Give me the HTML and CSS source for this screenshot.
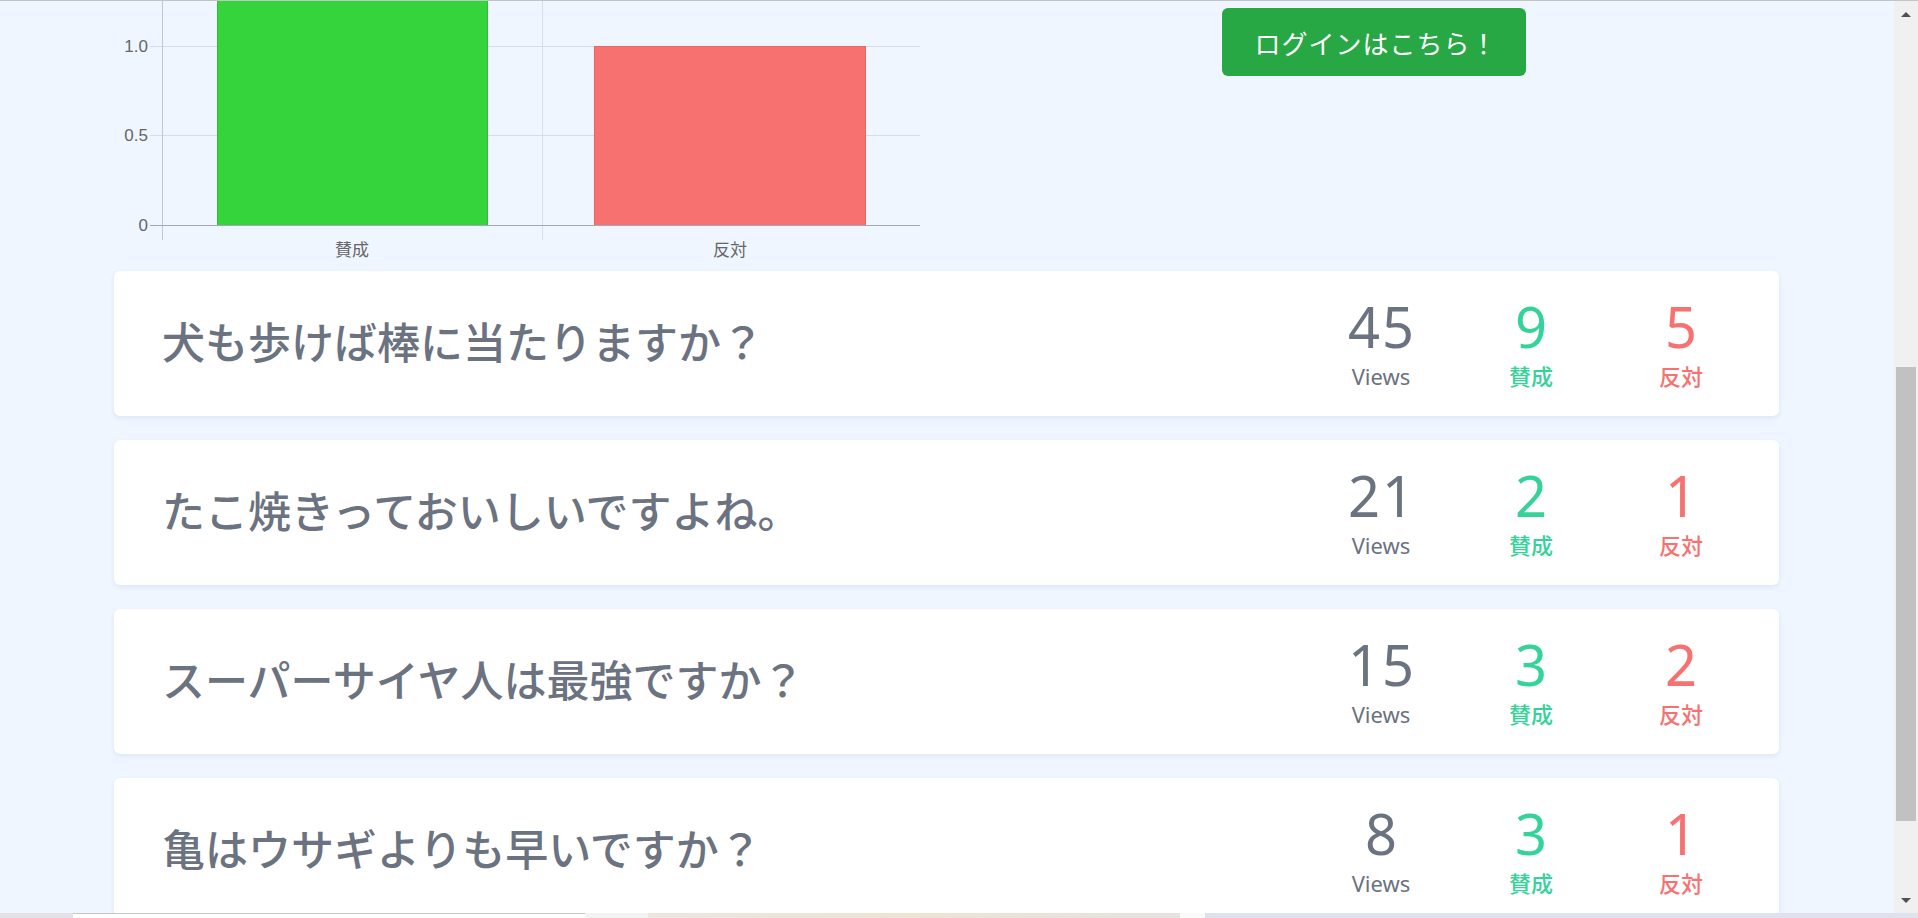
FILE: index.html
```html
<!DOCTYPE html>
<html lang="ja">
<head>
<meta charset="utf-8">
<title>質問一覧</title>
<link rel="stylesheet" href="styles.css">
</head>
<body>
<div class="screen">
  <div class="topline"></div>
  <div class="viewport">
    <main class="page">
      <div class="container">
        <section class="overview">
          <div class="chart">
            <svg class="chart-svg" width="810" height="262" viewBox="0 0 810 262">
              <g stroke="#d7dce5" stroke-width="1">
                <line x1="36" y1="45.5" x2="806" y2="45.5"/>
                <line x1="36" y1="134.5" x2="806" y2="134.5"/>
                <line x1="428.5" y1="0" x2="428.5" y2="239"/>
              </g>
              <line x1="48.5" y1="0" x2="48.5" y2="239" stroke="#c2c7cf" stroke-width="1"/>
              <rect x="103.5" y="-4" width="270" height="228.5" fill="#35d43d" stroke="#2dbf35" stroke-width="1"/>
              <rect x="480.5" y="45.5" width="271" height="179" fill="#f87171" stroke="#e96565" stroke-width="1"/>
              <line x1="36" y1="224.5" x2="806" y2="224.5" stroke="#a4a9b1" stroke-width="1"/>
              <g class="tick-y" text-anchor="end">
                <text x="34" y="51">1.0</text>
                <text x="34" y="140">0.5</text>
                <text x="34" y="230">0</text>
              </g>
              <g class="tick-x" text-anchor="middle">
                <text x="238" y="255">賛成</text>
                <text x="616" y="255">反対</text>
              </g>
            </svg>
          </div>
          <div class="login">
            <a class="login-btn" href="#">ログインはこちら！</a>
          </div>
        </section>

        <ul class="questions">
          <li class="card">
            <h2 class="q-title">犬も歩けば棒に当たりますか？</h2>
            <div class="stats">
              <div class="stat views"><span class="num">45</span><span class="label">Views</span></div>
              <div class="stat agree"><span class="num">9</span><span class="label">賛成</span></div>
              <div class="stat disagree"><span class="num">5</span><span class="label">反対</span></div>
            </div>
          </li>
          <li class="card">
            <h2 class="q-title">たこ焼きっておいしいですよね。</h2>
            <div class="stats">
              <div class="stat views"><span class="num">21</span><span class="label">Views</span></div>
              <div class="stat agree"><span class="num">2</span><span class="label">賛成</span></div>
              <div class="stat disagree"><span class="num">1</span><span class="label">反対</span></div>
            </div>
          </li>
          <li class="card">
            <h2 class="q-title">スーパーサイヤ人は最強ですか？</h2>
            <div class="stats">
              <div class="stat views"><span class="num">15</span><span class="label">Views</span></div>
              <div class="stat agree"><span class="num">3</span><span class="label">賛成</span></div>
              <div class="stat disagree"><span class="num">2</span><span class="label">反対</span></div>
            </div>
          </li>
          <li class="card">
            <h2 class="q-title">亀はウサギよりも早いですか？</h2>
            <div class="stats">
              <div class="stat views"><span class="num">8</span><span class="label">Views</span></div>
              <div class="stat agree"><span class="num">3</span><span class="label">賛成</span></div>
              <div class="stat disagree"><span class="num">1</span><span class="label">反対</span></div>
            </div>
          </li>
        </ul>
      </div>
    </main>
    <div class="scrollbar">
      <div class="sb-btn"><span class="tri-up"></span></div>
      <div class="sb-track"><div class="sb-thumb"></div></div>
      <div class="sb-btn"><span class="tri-down"></span></div>
    </div>
  </div>
  <div class="taskbar">
    <div class="tb tb-a"></div>
    <div class="tb tb-b"></div>
    <div class="tb tb-c"></div>
    <div class="tb tb-d"></div>
    <div class="tb tb-e"></div>
    <div class="tb tb-f"></div>
  </div>
</div>
</body>
</html>
```

FILE: styles.css
```css
* { box-sizing: border-box; }

html, body {
  margin: 0;
  padding: 0;
  width: 1918px;
  height: 918px;
  overflow: hidden;
  background: #eff6ff;
  font-family: "Noto Sans", "Noto Sans CJK JP", sans-serif;
}

.screen {
  display: flex;
  flex-direction: column;
  width: 1918px;
  height: 918px;
}

.topline {
  height: 1px;
  background: #c4c4c4;
  flex: none;
}

.viewport {
  flex: 1;
  display: flex;
  min-height: 0;
}

.page {
  flex: 1;
  overflow: hidden;
  background: #eff6ff;
}

.container {
  width: 1779px;
  padding-left: 114px;
}

/* ---------- overview (chart + login) ---------- */
.overview {
  display: flex;
  height: 270px;
}

.chart {
  width: 810px;
  height: 262px;
  flex: none;
}

.chart-svg {
  display: block;
  overflow: hidden;
}

.tick-y text {
  font-family: "Liberation Sans", Arial, sans-serif;
  font-size: 17px;
  fill: #666666;
}

.tick-x text {
  font-family: "Noto Sans CJK JP", sans-serif;
  font-size: 17px;
  fill: #666666;
}

.login {
  margin-left: 298px;
  padding-top: 7px;
}

.login-btn {
  display: flex;
  align-items: center;
  justify-content: center;
  width: 304px;
  height: 68px;
  background: #28a745;
  border-radius: 6px;
  color: #ffffff;
  text-decoration: none;
  font-family: "Noto Sans CJK JP", sans-serif;
  font-weight: 400;
  font-size: 26px;
  letter-spacing: 1px;
  padding-left: 4px;
}

/* ---------- question cards ---------- */
.questions {
  list-style: none;
  margin: 0;
  padding: 0;
  display: flex;
  flex-direction: column;
  gap: 24px;
}

.card {
  height: 145px;
  flex: none;
  background: #ffffff;
  border-radius: 6px;
  box-shadow: 0 2px 5px rgba(40, 70, 140, 0.09);
  display: flex;
  align-items: center;
  padding: 0 48px;
}

.q-title {
  flex: 1;
  margin: 0 0 6px 0;
  font-family: "Noto Sans CJK JP", sans-serif;
  font-weight: 500;
  font-size: 43px;
  line-height: 1;
  color: #6b7280;
}

.stats {
  display: flex;
  gap: 50px;
}

.stat {
  width: 100px;
  display: flex;
  flex-direction: column;
  align-items: center;
}

.num {
  font-family: "Noto Sans", sans-serif;
  font-size: 56px;
  line-height: 56px;
  letter-spacing: 2px;
  margin-right: -2px;
}

.label {
  margin-top: 8px;
  font-family: "Noto Sans", "Noto Sans CJK JP", sans-serif;
  font-weight: 400;
  font-size: 22px;
  line-height: 28px;
}

.agree .label, .disagree .label { font-weight: 500; }

.views .num, .views .label { color: #6b7280; }
.agree .num, .agree .label { color: #34d399; }
.disagree .num, .disagree .label { color: #f87171; }

/* ---------- fake scrollbar ---------- */
.scrollbar {
  width: 24px;
  flex: none;
  background: #f0f0f0;
  display: flex;
  flex-direction: column;
}

.sb-btn {
  height: 26px;
  flex: none;
  display: flex;
  align-items: center;
  justify-content: center;
}

.tri-up {
  width: 0;
  height: 0;
  border-left: 5px solid transparent;
  border-right: 5px solid transparent;
  border-bottom: 5px solid #505050;
}

.tri-down {
  width: 0;
  height: 0;
  border-left: 5px solid transparent;
  border-right: 5px solid transparent;
  border-top: 5px solid #505050;
}

.sb-track {
  flex: 1;
  padding: 340px 2px 0 2px;
}

.sb-thumb {
  height: 454px;
  background: #c1c1c1;
}

/* ---------- bottom strip ---------- */
.taskbar {
  height: 5px;
  flex: none;
  display: flex;
}

.tb { height: 5px; }
.tb-a { width: 73px; background: #e4e2e8; }
.tb-b { width: 512px; background: #ffffff; border-top: 1px solid #c8c8c8; }
.tb-c { width: 63px; background: #f3f3f3; }
.tb-d { width: 532px; background: linear-gradient(90deg, #ece6df, #efe3d2, #e6e2e2); }
.tb-e { width: 25px; background: #fafafa; }
.tb-f { flex: 1; background: #dfe2ee; }
```
